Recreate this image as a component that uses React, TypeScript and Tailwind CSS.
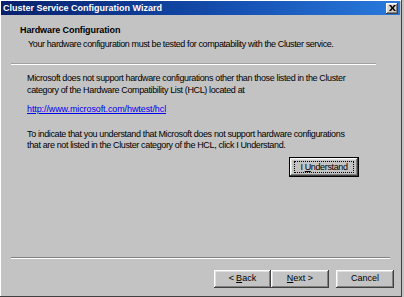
import React from "react";

const bevel =
  "shadow-[inset_-1px_-1px_#404040,inset_1px_1px_#ffffff,inset_-2px_-2px_#808080,inset_2px_2px_#dfdfdf]";

function WizButton({ children, className = "" }: { children: React.ReactNode; className?: string }) {
  return (
    <div
      className={`flex h-[18px] items-center justify-center whitespace-nowrap bg-[#c3c3c3] text-[9px] text-black ${bevel} ${className}`}
    >
      {children}
    </div>
  );
}

export default function App() {
  return (
    <div
      className="flex h-[297px] w-[404px] flex-col overflow-hidden bg-[#c3c3c3] text-black"
      style={{ fontFamily: '"Liberation Sans", Arial, sans-serif' }}
    >
      <div className="flex h-[297px] w-[402px] flex-col border-b border-r border-[#404040] shadow-[inset_1px_1px_#ffffff]">
        {/* Title bar */}
        <div className="mx-[1px] mt-[1px] flex h-[14px] items-center justify-between bg-gradient-to-r from-[#08206c] via-[#1248a8] to-[#2a7ade] pl-[2px] pr-[2px]">
          <span className="text-[9px] font-bold leading-none text-white">Cluster Service Configuration Wizard</span>
          <div className={`flex h-[11px] w-[12px] items-center justify-center bg-[#d4d0c8] ${bevel}`}>
            <svg width="7" height="6" viewBox="0 0 7 6">
              <path d="M0 0h2l1.5 2L5 0h2L4.5 3 7 6H5L3.5 4 2 6H0l2.5-3z" fill="#000" />
            </svg>
          </div>
        </div>

        {/* Header */}
        <div className="pl-[20px] pt-[9px]">
          <div className="text-[9px] font-bold leading-[12px] tracking-[-0.1px]">Hardware Configuration</div>
          <div className="mt-[2px] whitespace-nowrap pl-[8px] text-[9px] leading-[12px] tracking-[-0.4px]">
            Your hardware configuration must be tested for compatability with the Cluster service.
          </div>
        </div>
        <div className="ml-[11px] mt-[13px] w-[365px] border-b border-t border-b-white border-t-[#a0a0a0]" />

        {/* Content */}
        <div className="whitespace-nowrap pl-[27px] pr-[20px] pt-[8px] text-[9px] leading-[11.5px] tracking-[-0.37px]">
          <p>
            Microsoft does not support hardware configurations other than those listed in the Cluster
            <br />
            category of the Hardware Compatibility List (HCL) located at
          </p>
          <p className="mt-[8px] tracking-[-0.1px] text-[#0000ee] underline">http://www.microsoft.com/hwtest/hcl</p>
          <p className="mt-[13px]">
            To indicate that you understand that Microsoft does not support hardware configurations
            <br />
            that are not listed in the Cluster category of the HCL, click I Understand.
          </p>
          <div className="mt-[5px] flex justify-end pr-[22px]">
            <div className="border border-black">
              <WizButton className="w-[68px]">
                <span className="border border-dotted border-black px-[5px] leading-[10px]">
                  I <span className="underline">U</span>nderstand
                </span>
              </WizButton>
            </div>
          </div>
        </div>

        <div className="flex-1" />

        {/* Footer */}
        <div className="mx-[11px] border-b border-t border-b-white border-t-[#808080]" />
        <div className="flex justify-end gap-[7px] pb-[8px] pr-[7px] pt-[11px]">
          <div className="flex">
            <WizButton className="w-[57px]">
              &lt; <span className="ml-[2px] underline">B</span>ack
            </WizButton>
            <WizButton className="w-[58px]">
              <span className="underline">N</span>ext &gt;
            </WizButton>
          </div>
          <WizButton className="w-[58px]">Cancel</WizButton>
        </div>
      </div>
    </div>
  );
}
